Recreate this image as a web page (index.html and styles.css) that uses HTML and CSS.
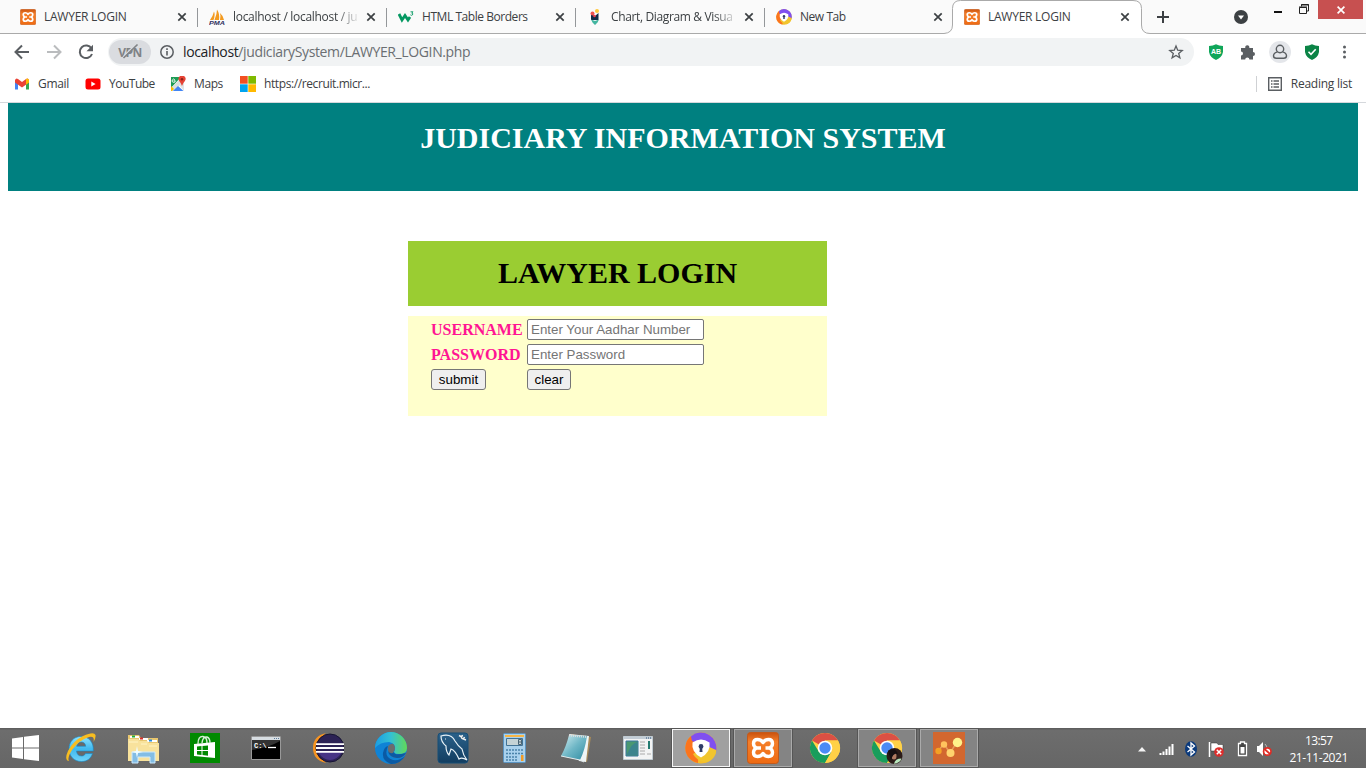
FILE: index.html
```html
<!DOCTYPE html>
<html lang="en">
<head>
<meta charset="utf-8">
<title>LAWYER LOGIN</title>
<link rel="stylesheet" href="styles.css">
</head>
<body>
<svg class="defs" width="0" height="0">
  <defs>
    <linearGradient id="gOrange" x1="0" y1="0" x2="0" y2="1"><stop offset="0" stop-color="#c9520e"/><stop offset=".3" stop-color="#f57f2a"/><stop offset="1" stop-color="#ee6a12"/></linearGradient>
    <linearGradient id="gIe" x1="0" y1="0" x2="0" y2="1"><stop offset="0" stop-color="#8fe3ff"/><stop offset=".5" stop-color="#3fb9ef"/><stop offset="1" stop-color="#6fd3f8"/></linearGradient>
    <linearGradient id="gEdge" x1="0" y1="0" x2="1" y2="0"><stop offset="0" stop-color="#1b9de2"/><stop offset=".5" stop-color="#34c1d2"/><stop offset="1" stop-color="#62d957"/></linearGradient>
    <linearGradient id="gPad" x1="0" y1="0" x2="1" y2="1"><stop offset="0" stop-color="#d4eef2"/><stop offset=".5" stop-color="#6fb7c6"/><stop offset="1" stop-color="#2e8ba1"/></linearGradient>
    <linearGradient id="gSql" x1="0" y1="0" x2="0" y2="1"><stop offset="0" stop-color="#2b618a"/><stop offset="1" stop-color="#123d60"/></linearGradient>
    <symbol id="xampp" viewBox="0 0 32 32">
      <rect x=".5" y=".5" width="31" height="31" rx="3" fill="url(#gOrange)" stroke="#c35a1b"/>
      <path d="M16 10.500Q14 7.500 10.500 7.500Q6.500 7.500 6.500 11.500Q6.500 14.500 9.500 16Q6.500 17.500 6.500 20.500Q6.500 24.500 10.500 24.500Q14 24.500 16 21.500Q18 24.500 21.500 24.500Q25.500 24.500 25.500 20.500Q25.500 17.500 22.500 16Q25.500 14.500 25.500 11.500Q25.500 7.500 21.500 7.500Q18 7.500 16 10.500zM9.500 16h4.500M18.500 16h4" fill="none" stroke="#fff" stroke-width="3.400" stroke-linejoin="round"/>
    </symbol>
    <symbol id="shieldball" viewBox="0 0 32 32">
      <circle cx="16" cy="16" r="15.500" fill="#f6bd27"/>
      <path d="M4 26A15.500 15.500 0 0 1 6 4l7 8l0 19A15.500 15.500 0 0 1 4 26z" fill="#fb741d"/>
      <path d="M6 4.200A15.500 15.500 0 0 1 31.200 19L23 16L7 9z" fill="#8050f0"/>
      <path d="M8 22Q13 31 23 29.800Q31 26 31.200 18L22 14z" fill="#f1c52e"/>
      <path d="M16 7.500Q20 7.500 24.500 10.500Q26 20 16 25.500Q6 20 7.500 10.500Q12 7.500 16 7.500z" fill="#fff"/>
      <circle cx="16" cy="14.500" r="2.400" fill="#303d68"/><path d="M15 14.500h2l.5 5.500h-3z" fill="#303d68"/>
    </symbol>
    <symbol id="chrome" viewBox="0 0 32 32">
      <circle cx="16" cy="16" r="15" fill="#ffd147"/>
      <path d="M16 16L3 8.500A15 15 0 0 1 29 8.500H16z" fill="#dc5044"/>
      <path d="M3 8.500A15 15 0 0 0 16 31L22.500 19.500L10 20z" fill="#199d5c"/>
      <path d="M29 8.500H16l6.500 11.500L16 31A15 15 0 0 0 29 8.500z" fill="#ffd147"/>
      <circle cx="16" cy="16" r="7.300" fill="#fff"/><circle cx="16" cy="16" r="5.700" fill="#4b8bf5"/>
    </symbol>
    <symbol id="close" viewBox="0 0 10 10"><path d="M1.300 1.300l7.400 7.400M8.700 1.300l-7.400 7.400" stroke="#3c4043" stroke-width="1.700" fill="none"/></symbol>
  </defs>
</svg>

<header class="browser">
  <div class="tabstrip">
    <div class="tab"><svg class="fav"><use href="#xampp"/></svg><span class="title t-login">LAWYER LOGIN</span><svg class="x"><use href="#close"/></svg></div>
    <div class="tab"><svg class="fav" viewBox="0 0 16 16"><path d="M1 11Q4 7 5 2.500Q6.500 6 4.500 11zM5.500 11Q8 5 8 .5Q11 5 10 11zM11 11Q12 7 11 4Q14.500 7 15 11z" fill="#f39a1f"/><text x="0" y="16" class="pma" textLength="16" lengthAdjust="spacingAndGlyphs">PMA</text></svg><span class="title t-pma fade">localhost / localhost / ju</span><svg class="x"><use href="#close"/></svg></div>
    <div class="tab"><svg class="fav" viewBox="0 0 16 16"><path d="M1 5L4 11L7 6.500L10 11L12 8" fill="none" stroke="#059862" stroke-width="2.800"/><path d="M12.500 2.800h2.500l-1.300 1.400q2 .2.700 1.800q-1 .7-2-.1" fill="none" stroke="#059862" stroke-width=".9"/></svg><span class="title t-html">HTML Table Borders</span><svg class="x"><use href="#close"/></svg></div>
    <div class="tab"><svg class="fav" viewBox="0 0 16 16"><path d="M4 5l4 2l3.500-3v7H4z" fill="#102c48"/><path d="M4 10.500l4 1.500l4-1.500l-1.500 3L8 16l-2.500-2.500z" fill="#43b5a0"/><circle cx="5.500" cy="4.500" r="2" fill="#ef5350"/><circle cx="10" cy="2" r="2" fill="#ffc83d"/><circle cx="7.500" cy="7" r="1.300" fill="#eb3f50"/></svg><span class="title t-chart fade">Chart, Diagram &amp; Visua</span><svg class="x"><use href="#close"/></svg></div>
    <div class="tab last"><svg class="fav"><use href="#shieldball"/></svg><span class="title t-new">New Tab</span><svg class="x"><use href="#close"/></svg></div>
    <div class="tab active">
      <svg class="shape" viewBox="0 0 206 34"><path d="M0 34V33.500Q8.500 33 8.500 25V8.500Q8.500.5 16.500.5H189Q197.500.5 197.500 8.500V25Q197.500 33.500 206 33.500V34z" fill="#fff"/><path d="M0 33.500Q8.500 33 8.500 25V8.500Q8.500.5 16.500.5H189Q197.500.5 197.500 8.500V25Q197.500 33.500 206 33.500" fill="none" stroke="#aaa"/></svg>
      <svg class="fav"><use href="#xampp"/></svg><span class="title t-login">LAWYER LOGIN</span><svg class="x"><use href="#close"/></svg>
    </div>
    <svg class="plus" viewBox="0 0 12 12"><path d="M6 0v12M0 6h12" stroke="#3c4043" stroke-width="2"/></svg>
    <svg class="tabsearch" viewBox="0 0 14 14"><circle cx="7" cy="7" r="7" fill="#3c4043"/><path d="M4 5.500h6L7 9.500z" fill="#fff"/></svg>
    <div class="winctl">
      <svg class="min" viewBox="0 0 8 2"><path d="M0 1h8" stroke="#111" stroke-width="2"/></svg>
      <svg class="restore" viewBox="0 0 10 10"><path d="M.5 3.500h7v6h-7zM0 3h8M2.500 2.500v-2h7v6.500h-2M2 1h8" fill="none" stroke="#222"/></svg>
      <div class="winclose"><svg viewBox="0 0 8 8"><path d="M.6.6l6.800 6.800M7.400.6L.6 7.400" stroke="#fff" stroke-width="1.700"/></svg></div>
    </div>
  </div>

  <div class="toolbar">
    <svg class="nav back" viewBox="0 0 16 16"><path d="M15 8H2M8 1.500L1.500 8L8 14.500" fill="none" stroke="#5a5e62" stroke-width="2"/></svg>
    <svg class="nav fwd" viewBox="0 0 16 16"><path d="M1 8h13M8 1.500L14.500 8L8 14.500" fill="none" stroke="#babcbe" stroke-width="2"/></svg>
    <svg class="nav reload" viewBox="0 0 16 16"><path d="M13.500 4.500A6.300 6.300 0 1 0 14 10" fill="none" stroke="#5a5e62" stroke-width="2"/><path d="M15 .8v6.500H8.500z" fill="#5a5e62"/></svg>
    <div class="omnibox">
      <div class="vpn"><span>VPN</span><svg viewBox="0 0 22 16"><path d="M5 14L18 1" stroke="#dadce0" stroke-width="1.500"/><path d="M5.500 15L19.500 1.500" stroke="#808387" stroke-width="1.700"/></svg></div>
      <svg class="info" viewBox="0 0 14 14"><circle cx="7" cy="7" r="6.200" fill="none" stroke="#5a5e62" stroke-width="1.500"/><path d="M7 6v4.500M7 3.300v1.600" stroke="#5a5e62" stroke-width="1.600"/></svg>
      <span class="url"><b>localhost</b>/judiciarySystem/LAWYER_LOGIN.php</span>
      <svg class="star" viewBox="0 0 16 16"><path d="M8 2L9.700 6.200L14.200 6.500L10.700 9.400L11.900 13.800L8 11.400L4.100 13.800L5.300 9.400L1.800 6.500L6.300 6.200z" fill="none" stroke="#5a5e62" stroke-width="1.300"/></svg>
    </div>
    <div class="ext">
      <svg viewBox="0 0 16 16"><path d="M1 2Q5 1.800 8 .3Q11 1.800 15 2V8Q14 13.500 8 16Q2 13.500 1 8z" fill="#10a65a"/><text x="8" y="9.800" class="ab">AB</text></svg>
      <svg viewBox="0 0 16 16"><path d="M1 4h4.300a2.100 2.100 0 1 1 4 0H13v4a2 2 0 1 1 0 4v3.500H9.400a2.100 2.100 0 0 0-4.200 0H1V11.500a2 2 0 0 0 0-4z" fill="#5a5e62"/></svg>
      <div class="avatar"><svg viewBox="0 0 16 16"><circle cx="8" cy="5" r="3.700" fill="none" stroke="#5a5e62" stroke-width="1.400"/><path d="M5.500 7.800Q1.500 9 1.500 11.800Q1.500 14.300 4.300 14.300h7.400q2.800 0 2.800-2.500Q14.500 9 10.500 7.800" fill="none" stroke="#5a5e62" stroke-width="1.400"/></svg></div>
      <svg viewBox="0 0 16 16"><path d="M1 2Q5 1.800 8 .3Q11 1.800 15 2V8Q14 13.500 8 16Q2 13.500 1 8z" fill="#0b8446"/><path d="M4.500 7.800l2.500 2.500l4.700-5" fill="none" stroke="#fff" stroke-width="1.600"/></svg>
      <svg viewBox="0 0 16 16"><g fill="#5a5e62"><circle cx="8.500" cy="3" r="1.500"/><circle cx="8.500" cy="8" r="1.500"/><circle cx="8.500" cy="13" r="1.500"/></g></svg>
    </div>
  </div>

  <nav class="bookmarks">
    <svg class="bm" viewBox="0 0 16 16"><path d="M1 4v9.500h3V6z" fill="#4285f4"/><path d="M12 6v7.500h3V4z" fill="#34a853"/><path d="M1 4v2.500L8 11.500L15 6.500V4Q14 1.500 12 3L8 6L4 3Q2 1.500 1 4z" fill="#ea4335"/><path d="M12 3v5.700l3-2.200V4Q14 1.500 12 3z" fill="#fbbc04"/></svg>
    <span class="b-gmail">Gmail</span>
    <svg class="bm" viewBox="0 0 16 16"><rect x=".5" y="2.500" width="15" height="11" rx="2.500" fill="#f00"/><path d="M6.300 5.500v5l4.300-2.500z" fill="#fff"/></svg>
    <span class="b-youtube">YouTube</span>
    <svg class="bm" viewBox="0 0 16 16"><path d="M1 1h13v14H1z" fill="#fff"/><path d="M1 1h10L1 12z" fill="#1d9c55"/><path d="M1 12L11 2l2 4L4 15H1z" fill="#dbe0df"/><path d="M3 15l5-5l5.500 5z" fill="#4285f4"/><path d="M9 9l5-4v10z" fill="#e0e4e5"/><path d="M1 10l3 3l-2 2H1z" fill="#fbbc04"/><path d="M3.500 4.800h1.800a1.600 1.600 0 1 1-.5-1.200" stroke="#fff" fill="none" stroke-width=".9"/><path d="M12 10Q11 7 9.200 5A3.500 3.500 0 1 1 14.900 5Q13 7 12 10z" fill="#e64435"/><circle cx="12" cy="3.300" r="1.200" fill="#8c2119"/></svg>
    <span class="b-maps">Maps</span>
    <svg class="bm" viewBox="0 0 16 16"><path d="M0 0h7.700v7.700H0z" fill="#f25022"/><path d="M8.300 0H16v7.700H8.300z" fill="#7fba00"/><path d="M0 8.300h7.700V16H0z" fill="#00a4ef"/><path d="M8.300 8.300H16V16H8.300z" fill="#ffb900"/></svg>
    <span class="b-ms">https://recruit.micr...</span>
    <div class="reading">
      <svg viewBox="0 0 14 14"><path d="M.7.7h12.600v12.600H.7zM3 4h1.500M5.500 4H11M3 7h1.500M5.500 7H11M3 10h1.500M5.500 10H11" fill="none" stroke="#5a5e62" stroke-width="1.400"/></svg>
      <span class="b-reading">Reading list</span>
    </div>
  </nav>
</header>

<main class="page">
  <h1 class="banner">JUDICIARY INFORMATION SYSTEM</h1>
  <section class="login">
    <h1 class="login-title">LAWYER LOGIN</h1>
    <form class="login-form">
      <label for="user">USERNAME</label><input id="user" type="text" placeholder="Enter Your Aadhar Number">
      <label for="pass">PASSWORD</label><input id="pass" type="password" placeholder="Enter Password">
      <button type="button" class="submit">submit</button><button type="button" class="clear">clear</button>
    </form>
  </section>
</main>

<footer class="taskbar">
  <div class="start"><svg viewBox="0 0 27 26"><path d="M0 3.500L11 2v10.500H0zM12 1.800L27 0v12.500H12zM0 13.500h11V24L0 22.500zM12 13.500h15V26l-15-1.800z" fill="#fff"/></svg></div>
  <div class="app"><svg viewBox="0 0 32 32"><path d="M16 4.500C8.500 4.500 4 10 4 17c0 7 5 12.500 12.500 12.500c5.500 0 9.500-3 11-8h-7c-1 2-2.300 2.500-4 2.500c-3 0-4.800-2-5-5h16.800C29 10.500 24 4.500 16 4.500zM11.700 14.300c.5-2.800 2-4.300 4.500-4.300s4.300 1.500 4.500 4.300z" fill="url(#gIe)" stroke="#168ac8" stroke-width=".6"/><path d="M4 29Q-1 28 3 19Q8 9 18 4Q29-1 30.500 3Q31 6 28.500 10Q30 3.500 24 5Q14 8 7 18Q2 26 4 29z" fill="#f8bd20"/></svg></div>
  <div class="app"><svg viewBox="0 0 32 32"><path d="M1 3h11l2 3h17v22H1z" fill="#e9c76f"/><path d="M3 4h9v2H3z" fill="#fff"/><path d="M5 3.500h3v2H5z" fill="#21ad38"/><path d="M12 6h9v2h-9z" fill="#fff"/><path d="M13 5.500h3v2h-3z" fill="#d8332b"/><path d="M20 8h10v2H20z" fill="#fff"/><path d="M22 7.500h3v2h-3z" fill="#278bdc"/><path d="M1 7h10l2 2h7l2 2h10v18H1z" fill="#f8e29c"/><path d="M2 10h9M14 12h6M22 14h8" stroke="#fff4c5"/><path d="M5 20h23v11h-5v-6H11v6H5z" fill="#83bde4" stroke="#cbeaff"/><path d="M10 14l1 5l5 1l-5 1l-1 5l-1-5l-5-1l5-1z" fill="#eefcff"/></svg></div>
  <div class="app"><svg viewBox="0 0 32 32"><path d="M1 1h30v30H1z" fill="#008a00"/><path d="M5 12l21-2v16L5 24z" fill="#fff"/><path d="M9 12Q9 4 14 4.500Q18 5 18 11M13 11Q14 4 18 5Q21 6 21 11" fill="none" stroke="#d5efd5" stroke-width="1.400"/><path d="M8 14.500l4.500-.5v4H8zM13.500 14l5.500-.5V18h-5.500zM8 19h4.500v4L8 22.500zM13.500 19H19v4.700l-5.500-.6z" fill="#008a00"/></svg></div>
  <div class="app nudge"><svg viewBox="0 0 32 32"><path d="M1.500 4.500h29v23h-29z" fill="#000" stroke="#999"/><path d="M2 5h28v3H2z" fill="#d7dde2"/><path d="M24 6.500h1M26 6.500h1M28 6.500h1" stroke="#5c7998"/><path d="M2 18Q18 16 30 9V8H2z" fill="#333"/><text x="4" y="16" class="cmd">C:\</text><path d="M18 15.500h8" stroke="#fff" stroke-width="1.300"/></svg></div>
  <div class="app nudge"><svg viewBox="0 0 32 32"><path d="M14 2A14.500 14.500 0 0 0 14 30.500Q6 24 6 16Q6 7 14 2z" fill="#f79421"/><path d="M14 1Q1 4 1 16Q1 28 14 31Q5 25 5 16Q5 7 14 1z" fill="#f79421"/><circle cx="18" cy="16" r="14" fill="#2c2255" stroke="#171533"/><path d="M6 20h24Q25 28 18 28T6 20z" fill="#473485"/><path d="M4 12.200h28M4 16h28M4 19.800h28" stroke="#fff" stroke-width="1.800"/></svg></div>
  <div class="app"><svg viewBox="0 0 32 32"><circle cx="16" cy="16" r="16" fill="#0f83d6"/><path d="M0 16A16 16 0 0 1 32 16Q32 22 24 22Q17 22 20 18Q21 11 14 10Q5 10 0 16z" fill="url(#gEdge)"/><path d="M13 14Q8 25 18 28Q25 29 30 24A16 16 0 0 1 16 32Q7 29 8 21Q9 15 13 14z" fill="#0b5aa4"/><path d="M13.500 13.500Q19 9 20 16Q20 18 18.500 20Q17 23 25 23L31 21Q28 26 23 26Q14 26 13 18Q12.600 15 13.500 13.500z" fill="#6c6c6c"/><path d="M19 20Q19 24 31 21Q28 26 22 26Q14 25 13 19Q16 23 19 20z" fill="#0b5aa4"/></svg></div>
  <div class="app"><svg viewBox="0 0 32 32"><rect x="1" y="1" width="30" height="30" rx="3" fill="url(#gSql)" stroke="#174e77"/><path d="M4 4Q14 1 18 9Q21 14 25 17Q26 23 30 28Q25 25 22 27Q18 18 14 17L12 23Q9 20 9 14Q4 10 4 4zM8 7h1" fill="none" stroke="#e7f1f6" stroke-width="1.200"/><path d="M22 3.500l2 1l1 2l4 1.500M24 4.500l2-1M26 6.500l2-1" stroke="#eee" stroke-width="1.500"/></svg></div>
  <div class="app nudge"><svg viewBox="0 0 32 32"><rect x="5.500" y="1.500" width="22" height="29" rx="1" fill="#a9d1ed" stroke="#5b94c2"/><path d="M7 3h19v2H7z" fill="#f7b545"/><path d="M8.500 6.500h16v7h-16z" fill="#c5d3d6" stroke="#427395"/><path d="M20.500 7.500h3v5h-3zM20.500 10h3" fill="none" stroke="#4a6576"/><path d="M8 18h11M8 21.500h11M8 25h11M8 28h11M20 18h5M20 21.500h5" stroke="#4a83aa" stroke-width="1.700" stroke-dasharray="2 1"/><path d="M23 23h2.500v6H23z" fill="#f39b24"/></svg></div>
  <div class="app nudge"><svg viewBox="0 0 32 32"><path d="M10 2L31 5L27 30L20 28z" fill="#a68a5a"/><path d="M9 2L29 4L26 30L19 29z" fill="#eef5f6"/><path d="M9 3L27 4Q25 18 20 28L1 24Q6 15 9 3z" fill="url(#gPad)"/><path d="M9 3.500L27 5" stroke="#ddd" stroke-width="2" stroke-dasharray="1 1"/><path d="M1 24l19 4l4 2" stroke="#e5edef" fill="none"/></svg></div>
  <div class="app nudge"><svg viewBox="0 0 32 32"><path d="M1.500 4.500h29v23h-29z" fill="#f3f4f4" stroke="#c0cbd2"/><path d="M2 6h28" stroke="#c3cdd6" stroke-width="2"/><path d="M24 6h1M26 6h1M28 6h1" stroke="#244e78"/><path d="M4 9h12v15H4z" fill="#4a9871" stroke="#3975a0"/><path d="M5 22Q10 11 15 10v13H5z" fill="#3476a2" opacity=".6"/><path d="M18 10h5M18 13h5M18 16h5M18 19h5M18 22h5M25 22h4" stroke="#aaa"/><path d="M26 9h2v8h-2z" fill="#247c72"/></svg></div>
  <div class="app running current"><svg viewBox="0 0 32 32"><use href="#shieldball"/></svg></div>
  <div class="app running"><svg viewBox="0 0 32 32"><use href="#xampp"/></svg></div>
  <div class="app"><svg viewBox="0 0 32 32"><use href="#chrome"/></svg></div>
  <div class="app running"><svg viewBox="0 0 32 32"><use href="#chrome"/><circle cx="23.500" cy="24" r="8" fill="#2b1b18"/><path d="M23 31.800Q24 26.500 30.500 26.500Q29 31 23 31.800z" fill="#b9e7be"/><ellipse cx="23" cy="24" rx="2.500" ry="3.500" fill="#b07961"/><path d="M17 19Q25 14 27 23Q23 19 20 28z" fill="#160f12"/></svg></div>
  <div class="app running"><svg viewBox="0 0 32 32"><path d="M0 0h32v32H0z" fill="#d2672f"/><path d="M5 19L11 12L17 21L24 10" fill="none" stroke="#e79b59" stroke-width="1.500"/><circle cx="5.500" cy="19" r="3.200" fill="#f3a126"/><circle cx="11" cy="12.500" r="3.200" fill="#ffc25d"/><circle cx="17.500" cy="21" r="4" fill="#ffd36d"/><circle cx="24.500" cy="10.500" r="4.700" fill="#fff18a"/></svg></div>
  <div class="tray">
    <svg viewBox="0 0 16 16" class="up"><path d="M4 10.500L8 6l4 4.500z" fill="#f4f4f4"/></svg>
    <svg viewBox="0 0 16 16" class="signal"><path d="M1.500 12v2M4.500 10.500v3.500M7.500 8v6M10.500 5.500V14M13.500 3v11" stroke="#fff" stroke-width="2"/></svg>
    <svg viewBox="0 0 16 16" class="bt"><ellipse cx="8" cy="8" rx="6" ry="7.800" fill="#0b3a7c"/><path d="M4.500 5l7 6L8 14V2l3.500 3l-7 6" fill="none" stroke="#fff" stroke-width="1.300"/></svg>
    <svg viewBox="0 0 16 16" class="flag"><path d="M1.500 1v15" stroke="#fff" stroke-width="1.500"/><path d="M3 2h6l1 1.500h5V10H3z" fill="#fff" stroke="#333" stroke-width=".5"/><circle cx="11" cy="11" r="4.800" fill="#de2d2c"/><path d="M8.800 8.800l4.400 4.400M13.200 8.800l-4.400 4.400" stroke="#fff" stroke-width="1.500"/></svg>
    <svg viewBox="0 0 16 16" class="battery"><path d="M4.500 2.500h2v-1.500h4v1.500h2v12h-8z" fill="#444" stroke="#fff" stroke-width="1.300"/><path d="M6.500 6h4v6.500h-4z" fill="#fff"/></svg>
    <svg viewBox="0 0 16 16" class="sound"><path d="M1 5h2l4-4v14l-4-4H1z" fill="#fff"/><path d="M9 3Q13 7 9 13" fill="none" stroke="#bbb"/><circle cx="11.300" cy="10.500" r="3.700" fill="#fff" stroke="#e02b24" stroke-width="1.700"/><path d="M8.500 8l5.600 5" stroke="#e02b24" stroke-width="1.700"/></svg>
  </div>
  <div class="clock"><span class="time">13:57</span><span class="date">21-11-2021</span></div>
</footer>
</body>
</html>
```
FILE: styles.css
```css
* { box-sizing: border-box; }
html, body { height: 768px; margin: 0; overflow: hidden; }
body { display: flex; flex-direction: column; background: #fff; font-family: "Liberation Serif", serif; }
svg { display: block; flex: none; }
.defs { position: absolute; }
.browser { height: 103px; flex: none; border-bottom: 1px solid #d5d8dc; font: 12px/16px "Open Sans", "Noto Sans", sans-serif; color: #3c4043; }

.tabstrip { display: flex; height: 34px; background: #fafafa; border-bottom: 1px solid #aaa; padding-left: 9px; }
.tab { position: relative; display: flex; align-items: center; width: 189px; height: 34px; padding: 0 11px 0 11px; flex: none; }
.tab::after { content: ""; position: absolute; right: 0; top: 8px; width: 1px; height: 19px; background: #94979a; }
.tab.last::after, .tab.active::after { display: none; }
.tab.last { width: 188px; padding-right: 10px; }
.tab.active { z-index: 1; padding-right: 12px; }
.tab.active .fav, .tab.active .title, .tab.active .x { position: relative; }
.shape { position: absolute; left: -9px; top: 0; width: 206px; height: 34px; }
.fav { width: 16px; height: 16px; margin-right: 8px; }
.title { flex: 1; white-space: nowrap; margin-right: 8px; }
.t-login { letter-spacing: -.25px; }
.t-pma { letter-spacing: -.3px; }
.t-html { letter-spacing: -.45px; }
.t-chart { letter-spacing: -.36px; }
.t-new { letter-spacing: -.45px; }
.fade { -webkit-mask-image: linear-gradient(90deg, #000 82%, transparent 102%); mask-image: linear-gradient(90deg, #000 82%, transparent 102%); }
.x { width: 10px; height: 10px; }
.pma { font: italic 900 6px "Liberation Sans", sans-serif; fill: #303060; }
.plus { width: 12px; height: 12px; margin: 11px 0 0 15px; }
.tabsearch { width: 14px; height: 14px; margin: 10px 0 0 65px; }
.winctl { display: flex; margin-left: auto; padding-right: 3px; }
.min { width: 8px; height: 2px; margin: 11px 17px 0 0; }
.restore { width: 10px; height: 10px; margin: 4px 9px 0 0; }
.winclose { display: flex; justify-content: center; align-items: center; width: 45px; height: 19px; background: #c75050; }
.winclose svg { width: 8px; height: 8px; }

.toolbar { display: flex; align-items: center; height: 36px; padding-left: 14px; }
.nav { width: 16px; height: 16px; margin-right: 16px; }
.reload { margin-right: 14px; }
.omnibox { display: flex; align-items: center; width: 1086px; height: 28px; border-radius: 14px; background: #f1f3f4; padding: 0 11px 0 1px; }
.vpn { position: relative; display: flex; justify-content: center; align-items: center; width: 42px; height: 24px; border-radius: 12px; background: #dadce0; color: #808387; font: bold 12px "Open Sans", sans-serif; letter-spacing: -.6px; }
.vpn svg { position: absolute; left: 9px; top: 3px; width: 22px; height: 16px; }
.info { width: 14px; height: 14px; margin: 0 9px; }
.url { flex: 1; font-size: 14px; line-height: 20px; letter-spacing: -.37px; color: #6a6e72; white-space: nowrap; }
.url b { font-weight: normal; color: #202124; }
.star { width: 16px; height: 16px; margin-right: -1px; }
.ext { display: flex; align-items: center; gap: 16px; margin-left: 14px; }
.ext svg { width: 16px; height: 16px; }
.avatar { display: flex; justify-content: center; align-items: center; width: 22px; height: 22px; margin: 0 -3px; border-radius: 50%; background: #e4e6ea; }
.ab { font: bold 7px "Liberation Sans", sans-serif; fill: #fff; text-anchor: middle; }

.bookmarks { display: flex; align-items: center; height: 32px; padding: 0 14px 4px 14px; }
.bm { width: 16px; height: 16px; margin-right: 8px; }
.bookmarks span { white-space: nowrap; }
.b-gmail { width: 47px; letter-spacing: -.3px; }
.b-youtube { width: 61px; letter-spacing: -.5px; }
.b-maps { width: 46px; letter-spacing: -.4px; }
.b-ms { letter-spacing: -.4px; }
.b-reading { letter-spacing: -.25px; }
.reading { display: flex; align-items: center; margin-left: auto; height: 16px; padding-left: 11px; border-left: 1px solid #cfd1d4; }
.reading svg { width: 14px; height: 14px; margin-right: 9px; }

.page { flex: 1; padding: 0 8px; }
h1 { margin: 0; text-align: center; font-size: 30px; font-weight: bold; line-height: 34px; }
.banner { height: 88px; padding-top: 18px; background: #008080; color: #fff; }
.login { width: 419px; margin: 50px 0 0 400px; }
.login-title { height: 65px; padding-top: 15px; background: #9acd32; color: #000; }
.login-form { display: grid; grid-template-columns: 96px 177px; grid-auto-rows: 21px; row-gap: 4px; align-items: center; height: 100px; margin-top: 10px; padding: 3px 23px; background: #ffc; }
.login-form label { font-size: 16px; font-weight: bold; color: #ff1493; }
.login-form input, .login-form button { height: 21px; margin: 0; font: 13.333px "Liberation Sans", sans-serif; }
.login-form input { width: 177px; padding: 1px 2px 1px 3px; border: 1px solid #767676; border-radius: 2px; background: #fff; }
.login-form input::placeholder { color: #757575; }
.login-form button { padding: 0; border: 1px solid #767676; border-radius: 3px; background: #efefef; color: #000; }
.login-form .submit { width: 55px; }
.login-form .clear { width: 44px; }

.taskbar { display: flex; height: 40px; flex: none; background: linear-gradient(#5e5e5e 0 1px, #6d6d6d 2px, #666); font: 12px/16px "Open Sans", "Noto Sans", sans-serif; color: #fff; }
.start { display: flex; align-items: center; width: 50px; padding-left: 12px; }
.start svg { width: 27px; height: 26px; }
.app { display: flex; justify-content: center; align-items: center; width: 62px; }
.app svg { width: 32px; height: 32px; }
.nudge { padding-right: 2px; }
.running { width: 58px; margin: 1px 2px 1px; border: 1px solid #aaa; background: #848484; outline: 1px solid #565656; }
.current { border: 1px solid #f6f6f6; background: #a0a0a0; }
.cmd { font: bold 7px "Liberation Mono", monospace; fill: #fff; }
.tray { display: flex; align-items: center; margin-left: 154px; padding-top: 1px; }
.tray svg { width: 16px; height: 16px; }
.up { margin-right: 9px; }
.signal { margin-right: 8px; }
.bt { margin-right: 9px; }
.flag { margin-right: 10px; }
.battery { margin-right: 6px; }
.clock { display: flex; flex-direction: column; align-items: center; margin-left: auto; padding: 4px 18px 0 0; line-height: 17px; }
.time { letter-spacing: -.6px; }
.date { letter-spacing: -.4px; }
```
